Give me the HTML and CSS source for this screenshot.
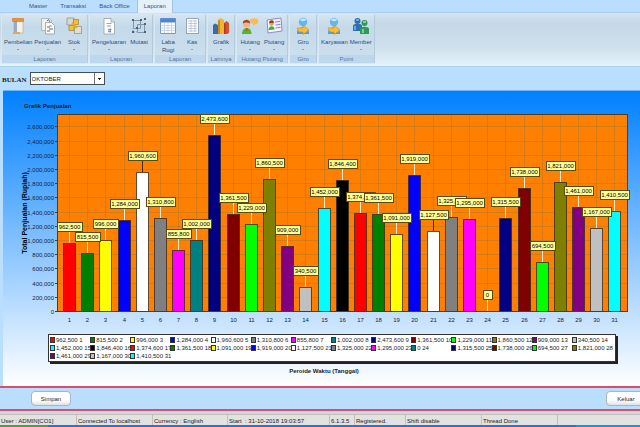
FILE: index.html
```html
<!DOCTYPE html>
<html lang="id">
<head>
<meta charset="utf-8">
<title>Grafik Penjualan</title>
<link rel="stylesheet" href="styles.css">
</head>
<body>
<div class="app">
  <nav class="tabs">
    <a class="tab" href="#">Master</a>
    <a class="tab" href="#">Transaksi</a>
    <a class="tab" href="#">Back Office</a>
    <a class="tab active" href="#">Laporan</a>
  </nav>

  <div class="ribbon">
    <section class="group">
      <div class="tools">
        <button class="tool drop"><svg class="icon" viewBox="0 0 18 18"><path d="M5 3h9v13H5z" fill="#f4f1e6" stroke="#a9a9a0" stroke-width=".6"/><path d="M5 3h3v13H5z" fill="#9aa9c8"/><path d="M3.500 1.500h11v3h-11z" fill="#e8952f" stroke="#c7742a" stroke-width=".6"/><path d="M4 15h7v2H4z" fill="#e8a755"/></svg><span>Pembelian</span></button>
        <button class="tool drop"><svg class="icon" viewBox="0 0 18 18"><path d="M2.500 1.500h8l2 2v10h-10z" fill="#eef1ee" stroke="#9aa5ac" stroke-width=".7"/><path d="M6.500 5.500h6l3 3v8.500h-9z" fill="#fbfaf2" stroke="#8795a5" stroke-width=".7"/><path d="M8 4l1.500-1.500L11 5M8 10h3M10 12h4M8 14h3" stroke="#56709a" fill="none"/><path d="M10 9h3" stroke="#c09a48"/></svg><span>Penjualan</span></button>
        <button class="tool drop"><svg class="icon" viewBox="0 0 18 18"><path d="M2 1h7v7H2z" fill="#d9d7cc" stroke="#8b8a80" stroke-width=".7"/><path d="M8.500 2.500h5v5h-5z" fill="#f5bf32" stroke="#a8802f" stroke-width=".7"/><path d="M4 8.500h5v5H4z" fill="#f3c236" stroke="#a8802f" stroke-width=".7"/><path d="M9.500 9.500h7v7h-7z" fill="#e2dfcf" stroke="#8b8a80" stroke-width=".7"/><path d="M7 6l5 5" stroke="#e0ab2a" stroke-width="2"/></svg><span>Stok</span></button>
      </div>
      <h2>Laporan</h2>
    </section>
    <section class="group">
      <div class="tools">
        <button class="tool drop"><svg class="icon" viewBox="0 0 18 18"><path d="M4 1.500h7l3.500 3.500v12H4z" fill="#fbfcfb" stroke="#8d98a4" stroke-width=".7"/><path d="M11 1.500V5h3.500" fill="#dbe2e8" stroke="#8d98a4" stroke-width=".7"/><path d="M6.500 6.500h5" stroke="#c99b6b"/><path d="M7 9h4M8.500 12.500h3M8 14.500h3M9 11.500v4M10.500 11.500v4" stroke="#71889e" stroke-width=".8"/></svg><span>Pengeluaran</span></button>
        <button class="tool"><svg class="icon" viewBox="0 0 18 18"><path d="M3.500 3.500h7v8h-7zM7.500 7.500h7v8h-7z" fill="none" stroke="#8496aa"/><path d="M2 2h2v2H2zM10 2h2v2h-2zM2 14h2v2H2zM14 6h2v2h-2zM14 14h2v2h-2zM6 10h2v2H6zM14 1h2v2h-2z" fill="#4d627b"/><path d="M3 11v3M7 15H4" stroke="#8d9fb3" stroke-dasharray="1 1"/></svg><span>Mutasi</span></button>
      </div>
      <h2>Laporan</h2>
    </section>
    <section class="group">
      <div class="tools">
        <button class="tool"><svg class="icon" viewBox="0 0 18 18"><path d="M1.500 1.500h15v15h-15z" fill="#fff" stroke="#5c83bd" stroke-width=".8"/><path d="M1.500 1.500h15v4h-15z" fill="#4f85cf"/><path d="M2 8.500h14M2 11h14M2 13.500h14M5.500 6v10M9 6v10M12.500 6v10" stroke="#a9bfd8" stroke-width=".6"/></svg><span>Laba<br>Rugi</span></button>
        <button class="tool drop"><svg class="icon" viewBox="0 0 18 18"><path d="M3.500 1.500h12v15h-12z" fill="#fff" stroke="#7b92ad" stroke-width=".8"/><path d="M5 4h9M5 6.500h9M5 9h9M5 11.500h9M5 14h9M8 3v12M12 3v12" stroke="#a9b8c8" stroke-width=".7"/></svg><span>Kas</span></button>
      </div>
      <h2>Laporan</h2>
    </section>
    <section class="group">
      <div class="tools">
        <button class="tool drop"><svg class="icon" viewBox="0 0 18 18"><path d="M1 8l2-1.500L6 8v9H1z" fill="#3a6aa8"/><path d="M6 3l2.500-2L12 3v14H6z" fill="#efb62e"/><path d="M6 3l2 1v13H6z" fill="#ca8a1b"/><path d="M12 6l2.500-2L17 6v10l-2 1h-3z" fill="#d9502e"/><path d="M12 6l1.500 1v10H12z" fill="#a83922"/></svg><span>Grafik</span></button>
      </div>
      <h2>Lainnya</h2>
    </section>
    <section class="group">
      <div class="tools">
        <button class="tool drop"><svg class="icon" viewBox="0 0 18 18"><path d="M9 3.500C9 1 17.500 0 17.500 4S13 7 12 9V7C10 6.500 9 5 9 3.500z" fill="#f8bd55"/><circle cx="5.500" cy="7" r="3.600" fill="#f3b47e"/><path d="M1.800 6.500C1.500 1.500 9.500 1.500 9.200 6.500 7 5 4 5 1.800 6.500z" fill="#9a4a24"/><path d="M1 17c0-8 9.500-8 9.500 0z" fill="#57b52d"/><path d="M4.500 11.500l1.200 3 1.300-3z" fill="#e93c24"/></svg><span>Hutang</span></button>
        <button class="tool drop"><svg class="icon" viewBox="0 0 18 18"><path d="M2 3l14-2 1 13-14 2z" fill="#f5f3fc" stroke="#8a7fc1" stroke-width=".9"/><path d="M10 5l5-.7M10.500 8l5-.7M10.500 11l5-.7" stroke="#9d88d4" stroke-width="1.200"/><circle cx="6.500" cy="6.500" r="2.200" fill="#e79c62"/><path d="M4 6c0-3.500 5-3.500 5-.3z" fill="#7c4026"/><path d="M3.500 13c0-5 6-5 6-.5z" fill="#49a832"/></svg><span>Piutang</span></button>
      </div>
      <h2>Hutang Piutang</h2>
    </section>
    <section class="group">
      <div class="tools">
        <button class="tool drop"><svg class="icon" viewBox="0 0 18 18"><circle cx="9" cy="5" r="4.200" fill="#63b7ee"/><path d="M6 3c1-2 5-2 6 0-1 1.500-5 1.500-6 0z" fill="#c6ebff"/><path d="M3 17c-1-9 13-9 12 0z" fill="#4c9fe0"/><path d="M3 11h6V8l6 5-6 4.500V15H5z" fill="#f8bf35" stroke="#cf8e1c" stroke-width=".6"/></svg><span>Giro</span></button>
      </div>
      <h2>Giro</h2>
    </section>
    <section class="group">
      <div class="tools">
        <button class="tool"><svg class="icon" viewBox="0 0 18 18"><circle cx="9" cy="5" r="4.200" fill="#63b7ee"/><path d="M6 3c1-2 5-2 6 0-1 1.500-5 1.500-6 0z" fill="#c6ebff"/><path d="M3 17c-1-9 13-9 12 0z" fill="#4c9fe0"/><path d="M3 11h6V8l6 5-6 4.500V15H5z" fill="#f8bf35" stroke="#cf8e1c" stroke-width=".6"/></svg><span>Karyawan</span></button>
        <button class="tool drop"><svg class="icon" viewBox="0 0 18 18"><circle cx="5.500" cy="4" r="3" fill="#2c6fb0"/><path d="M1 14V9c0-3 9-3 9 0v5z" fill="#2c6fb0"/><path d="M4 2h3v2H4zM2 9h2v4H2z" fill="#69a9dc"/><circle cx="12.500" cy="6" r="3" fill="#2f9a58"/><path d="M8 17v-5c0-3 9-3 9 0v5z" fill="#2f9a58"/><path d="M11 4h3v2h-3zM10 12h2v4h-2z" fill="#7ed092"/></svg><span>Member</span></button>
      </div>
      <h2>Point</h2>
    </section>
  </div>

  <form class="filter">
    <label for="bulan">BULAN</label>
    <select id="bulan"><option>OKTOBER</option></select>
  </form>

  <main class="panel">
    <h1>Grafik Penjualan</h1>
    <svg class="chart" id="chart" viewBox="0 0 637 218" role="img" aria-label="Grafik Penjualan"></svg>
    <ul class="legend" id="legend"></ul>
    <p class="caption">Peroide Waktu (Tanggal)</p>
  </main>

  <div class="actions">
    <button class="action">Simpan</button>
    <button class="action">Keluar</button>
  </div>

  <footer class="status">
    <span>User : ADMIN[CO1]</span>
    <span>Connected To localhost</span>
    <span>Currency : English</span>
    <span>Start &nbsp;: 31-10-2018 19:03:57</span>
    <span>6.1.3.5</span>
    <span>Registered.</span>
    <span>Shift disable</span>
    <span>Thread Done</span>
    <span></span>
  </footer>
  <div class="taskbar"></div>
</div>
<script src="chart.js"></script>
</body>
</html>
```

FILE: styles.css
```css
* {
  box-sizing: border-box;
}

body {
  margin: 0;
  background: #badefd;
  color: #1c1c24;
  font: 6px/8px "Liberation Sans", Arial, sans-serif;
  overflow-x: hidden;
}

h1,
h2,
p,
ul {
  margin: 0;
  padding: 0;
  font-size: 6px;
}

button,
select {
  font: inherit;
  color: inherit;
}

.app {
  display: flex;
  flex-direction: column;
  min-height: 100vh;
}

/* Ribbon */
.tabs {
  display: flex;
  gap: 1px;
  padding-left: 23px;
  border-bottom: 1px solid #b0cbf3;
}

.tab {
  padding: 2px 6px;
  color: #34568a;
  text-decoration: none;
}

.tab.active {
  margin-bottom: -1px;
  border: 1px solid #a6c3e2;
  border-width: 0 1px;
  background: #e4f1fa;
}

.ribbon {
  display: flex;
  gap: 1px;
  padding: 1px 1px 2px;
  border-bottom: 1px solid #abd2e2;
  background: linear-gradient(#d3e4ee, #c5d8e6 20%, #cfe0ed 65%, #e4f3fc);
}

.group {
  display: flex;
  flex-direction: column;
  border: 1px solid #d9e8f3;
  border-right-color: #b3cbdd;
  border-radius: 2px;
  background: linear-gradient(#d5e5f0, #c4d9e9 25%, #cee0ef);
}

.group h2 {
  background: #bfd7ec;
  color: #54759f;
  font-weight: normal;
  text-align: center;
}

.tools {
  display: flex;
  flex: 1;
  min-height: 40px;
  padding: 2px 1px 0;
}

.tool {
  display: flex;
  flex-direction: column;
  align-items: center;
  min-width: 24px;
  padding: 0 1px;
  border: 0;
  background: none;
  color: #294c80;
}

.icon {
  width: 18px;
  height: 18px;
  margin-bottom: 3px;
}

.drop::after {
  content: "";
  margin-top: 3px;
  border: 1px solid transparent;
  border-top-color: #4a6a96;
}

/* Month filter */
.filter {
  display: flex;
  align-items: center;
  gap: 3px;
  padding: 5px 2px;
}

.filter label {
  padding-top: 3px;
  font: bold 7px/8px "Liberation Serif", serif;
}

.filter select {
  width: 75px;
  height: 13px;
  padding: 0 1px;
  border: 1px solid #43505c;
  border-radius: 0;
  appearance: none;
  background:
    linear-gradient(#222, #222) right 3px top 5px / 3px 1px no-repeat,
    linear-gradient(#222, #222) right 4px top 6px / 1px 1px no-repeat,
    linear-gradient(#66717a, #66717a) right 9px top 0 / 1px 100% no-repeat,
    #fdfdf9;
}

/* Chart panel */
.panel {
  flex: 1;
  margin-left: 3px;
  padding: 11px 0;
  border-top: 1px solid #6fb6f8;
  background: linear-gradient(#0080ff, #fff);
}

.panel h1 {
  padding-left: 21px;
}

.chart {
  display: block;
  width: 100%;
}

.grid {
  stroke: #a07838;
  stroke-opacity: 0.45;
}

.plot {
  fill: #ff8000;
}

.frame {
  fill: none;
  stroke: #4c3c28;
}

.axis {
  fill: #16233c;
}

.axis-y {
  text-anchor: end;
}

.axis-x,
.tag-text {
  text-anchor: middle;
}

.axis-title {
  font-size: 7px;
  font-weight: bold;
  text-anchor: middle;
}

.bar {
  stroke: #3a2c20;
  stroke-opacity: 0.8;
}

.lead {
  stroke: #ffe9c8;
}

.lead.dark {
  stroke: #3a2c20;
}

.tag {
  fill: #ffff98;
  stroke: #5a4a18;
}

.legend {
  display: grid;
  grid-template-columns: repeat(14, minmax(0, 1fr));
  margin: 6px 24px 5px 45px;
  padding: 1px 3px 1px 1px;
  border: 1px solid #333;
  background: #fff;
  box-shadow: 2px 2px #222;
  list-style: none;
}

.legend li {
  display: flex;
  align-items: center;
  gap: 1px;
  white-space: nowrap;
}

.swatch {
  flex: none;
  width: 5px;
  height: 6px;
  border: 1px solid #333;
}

.caption {
  padding-left: 5px;
  font-weight: bold;
  text-align: center;
}

/* Footer */
.actions {
  display: flex;
  justify-content: space-between;
  margin-right: -6px;
  padding: 3px 0 3px 31px;
  border: 2px solid #d6506e;
  border-width: 2px 0;
}

.action {
  width: 40px;
  height: 15px;
  padding: 0;
  border: 1px solid #a9b4bf;
  border-radius: 4px;
  background: linear-gradient(#fff 60%, #dfe3e6);
}

.status {
  display: grid;
  grid-template-columns: 76fr 76fr 75fr 102fr 25fr 51fr 76fr 76fr 83fr;
  padding-top: 3px;
  background: #c9d9e6;
}

.status span {
  height: 11px;
  padding: 2px 1px 1px;
  border: 1px solid #c4bfba;
  border-width: 1px 0 0 1px;
  background: #e2e2e0;
  white-space: nowrap;
}

.status span:first-child {
  border-left: 0;
}

.taskbar {
  height: 2px;
  background: linear-gradient(90deg, #4b9e44 7.5%, #2f70d8 7.5% 90%, #1398dc 90%);
}
```

FILE: chart.js
```js
const sales = [
  962500, 815500, 996000, 1284000, 1960600, 1310800, 855800, 1002000,
  2473600, 1361500, 1229000, 1860500, 909000, 340500, 1452000, 1846400,
  1374600, 1361500, 1091000, 1919000, 1127500, 1325000, 1295000, 0,
  1315500, 1738000, 694500, 1821000, 1461000, 1167000, 1410500
];
const palette = [
  "#ff0000", "#008000", "#ffff00", "#0000ff", "#ffffff", "#808080",
  "#ff00ff", "#008080", "#000080", "#800000", "#00ff00", "#808000",
  "#800080", "#c0c0c0", "#00ffff", "#000000"
];

const plot = { left: 54, right: 624, top: 4, base: 201 };
const perUnit = 14.2 / 200000;
const xOf = (i) => plot.left + 12 + i * 18.18;
const yOf = (v) => plot.base - v * perUnit;
const format = (v) => v.toLocaleString("en-US");
const colorOf = (i) => palette[i % palette.length];

const chart = document.getElementById("chart");

function add(name, attrs, text) {
  const node = document.createElementNS("http://www.w3.org/2000/svg", name);
  for (const key in attrs) node.setAttribute(key, attrs[key]);
  if (text !== undefined) node.textContent = text;
  chart.appendChild(node);
}

const frame = {
  x: plot.left, y: plot.top,
  width: plot.right - plot.left, height: plot.base - plot.top
};

add("rect", { class: "plot", ...frame });

for (let v = 0; v <= 2600000; v += 200000) {
  const y = Math.round(yOf(v));
  if (v) add("path", { class: "grid", d: `M${plot.left} ${y + 0.5}H${plot.right}` });
  add("path", { class: "frame", d: `M${plot.left - 2} ${y + 0.5}h2` });
  add("text", { class: "axis axis-y", x: plot.left - 3, y: y + 3 }, format(v));
}

sales.forEach((v, i) => {
  const x = Math.round(xOf(i)) + 0.5;
  add("path", { class: "grid", d: `M${x} ${plot.top}V${plot.base}` });
  add("text", { class: "axis axis-x", x: x, y: plot.base + 11 }, i + 1);
});

sales.forEach((v, i) => {
  if (!v) return;
  const y = Math.round(yOf(v)) + 0.5;
  add("rect", {
    class: "bar", x: Math.round(xOf(i)) - 5.5, y: y,
    width: 12, height: plot.base + 0.5 - y, fill: colorOf(i)
  });
});

add("rect", {
  class: "frame", x: frame.x + 0.5, y: frame.y + 0.5,
  width: frame.width, height: frame.height
});

sales.forEach((v, i) => {
  const x = Math.round(xOf(i)) + 0.5;
  const y = Math.round(yOf(v));
  const label = format(v);
  const width = label.length > 7 ? 29 : label.length > 1 ? 25 : 9;
  const tone = colorOf(i) === "#ffffff" ? "lead dark" : "lead";
  add("path", { class: tone, d: `M${x} ${y - 11}V${y}` });
  add("rect", {
    class: "tag", x: Math.round(x - width / 2) + 0.5, y: y - 20.5,
    width: width, height: 9
  });
  add("text", { class: "tag-text", x: x, y: y - 14 }, label);
});

add("text", {
  class: "axis-title", transform: "translate(24 103) rotate(-90)"
}, "Total Penjualan (Rupiah)");

const legend = document.getElementById("legend");
sales.forEach((v, i) => {
  const item = document.createElement("li");
  const swatch = document.createElement("i");
  swatch.className = "swatch";
  swatch.style.background = colorOf(i);
  item.append(swatch, `${format(v)} ${i + 1}`);
  legend.append(item);
});
```
